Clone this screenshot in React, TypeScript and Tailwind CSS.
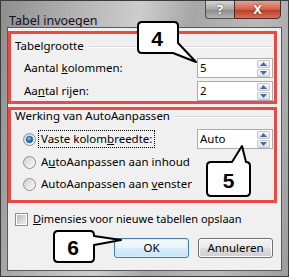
import React from "react";

// ── Small controls ────────────────────────────────────────────────────────────
function Arrow({ up }: { up?: boolean }) {
  return (
    <svg width="7" height="4" viewBox="0 0 7 4">
      <path d={up ? "M0 4 L3.5 0 L7 4 Z" : "M0 0 L3.5 4 L7 0 Z"} fill="#4569ad" />
    </svg>
  );
}

function SpinBtn({ up }: { up?: boolean }) {
  return (
    <div className="flex h-[8px] w-[13px] items-center justify-center rounded-[1px] border border-[#c4c7cc] bg-[linear-gradient(#f7f7f7,#e2e3e6)]">
      <Arrow up={up} />
    </div>
  );
}

function SpinBox({ value }: { value: string }) {
  return (
    <div className="flex h-[20px] w-[76px] items-center border border-[#abadb3] bg-white pl-[2px] pr-[2px]">
      <span className="flex-1 text-[11.5px] leading-none text-black">{value}</span>
      <div className="flex flex-col gap-px">
        <SpinBtn up />
        <SpinBtn />
      </div>
    </div>
  );
}

function Radio({ checked }: { checked?: boolean }) {
  return (
    <svg width="13" height="13" viewBox="0 0 13 13" className="shrink-0">
      <defs>
        <linearGradient id="rg" x1="0" y1="0" x2="1" y2="1">
          <stop offset="0" stopColor="#cfcfcf" />
          <stop offset="1" stopColor="#fdfdfd" />
        </linearGradient>
        <radialGradient id="rb" cx="0.4" cy="0.35" r="0.7">
          <stop offset="0" stopColor="#8fd0ff" />
          <stop offset="0.5" stopColor="#1d7fd0" />
          <stop offset="1" stopColor="#0b4f91" />
        </radialGradient>
      </defs>
      <circle cx="6.5" cy="6.5" r="6" fill="url(#rg)" stroke="#8e8f8f" />
      {checked && <circle cx="6.5" cy="6.5" r="3.3" fill="url(#rb)" stroke="#1c5180" strokeWidth="0.6" />}
    </svg>
  );
}

function Check() {
  return (
    <div className="flex h-[13px] w-[13px] shrink-0 items-center justify-center border border-[#8e8f8f] bg-white">
      <div className="h-[9px] w-[9px] bg-[linear-gradient(135deg,#b9b9b9,#f0f0f0)]" />
    </div>
  );
}

function Btn({ label, def }: { label: string; def?: boolean }) {
  return (
    <div
      className={
        def
          ? "flex h-[20px] w-[75px] items-center justify-center rounded-[3px] border border-[#3c7fb1] bg-[linear-gradient(#f6fbfe_0%,#e8f4fc_50%,#d8ecf9_51%,#c8e5f8_100%)] shadow-[inset_0_0_0_1px_#d2f0fd] text-[11.5px] text-black"
          : "flex h-[20px] w-[75px] items-center justify-center rounded-[3px] border border-[#707070] bg-[linear-gradient(#f2f2f2_0%,#ebebeb_50%,#dddddd_51%,#cfcfcf_100%)] shadow-[inset_0_0_0_1px_#fcfcfc] text-[11.5px] text-black"
      }
    >
      {label}
    </div>
  );
}

function GroupLabel({ text }: { text: string }) {
  return (
    <div className="flex h-[12px] items-center pl-[4px] pr-[2px] leading-[12px]">
      <span className="text-[11.5px] text-black">{text}</span>
      <div className="ml-[4px] h-px flex-1 bg-[#d5dfe5] shadow-[0_1px_0_#ffffff]" />
    </div>
  );
}

// ── Main ──────────────────────────────────────────────────────────────────────
export default function App() {
  return (
    <div className="relative flex h-[277px] w-[289px] flex-col overflow-hidden border border-[#3b3b3b] bg-[linear-gradient(100deg,#8e8e8e_0%,#b2b2b2_22%,#cdcdcd_42%,#a6a6a6_58%,#bababa_78%,#9d9d9d_100%)] font-['Noto_Sans',sans-serif]">
      {/* Title bar */}
      <div className="h-[26px] shrink-0 pl-[8px] pt-[6px]">
        <span className="text-[12.5px] leading-[16px] text-[#111122]">Tabel invoegen</span>
      </div>

      {/* Caption buttons */}
      <div className="absolute right-[7px] top-[-1px] flex h-[19px]">
        <div className="flex w-[29px] items-center justify-center rounded-bl-[4px] border border-r-0 border-[#4f4f4f] bg-[linear-gradient(#d6d6d6,#a4a4a4_50%,#8c8c8c_51%,#b4b4b4)] text-[13px] font-bold leading-none text-white [text-shadow:0_0_2px_#333]">
          ?
        </div>
        <div className="flex w-[47px] items-center justify-center rounded-br-[4px] border border-[#4f2a24] bg-[linear-gradient(#e8a090,#d0604c_50%,#b83a24_51%,#d9705a)] text-[13px] font-bold leading-none text-white [text-shadow:0_0_2px_#5a1a10]">
          X
        </div>
      </div>

      {/* Client area */}
      <div className="mx-[6px] flex h-[244px] flex-col border border-[#5a5a5a] bg-[#f0f0f0]">
        {/* Tabelgrootte */}
        <div className="mt-[3px] w-[269px] border-[3px] border-[#e84b44] pt-[6px]">
          <GroupLabel text="Tabelgrootte" />
          <div className="mt-[6px] flex h-[20px] items-center justify-between pl-[13px] pr-[1px]">
            <span className="text-[11.5px] text-black">
              Aantal <span className="underline">k</span>olommen:
            </span>
            <SpinBox value="5" />
          </div>
          <div className="mt-[3px] flex h-[20px] items-center justify-between pl-[13px] pr-[1px]">
            <span className="text-[11.5px] text-black">
              Aa<span className="underline">n</span>tal rijen:
            </span>
            <SpinBox value="2" />
          </div>
        </div>

        {/* Werking van AutoAanpassen */}
        <div className="mt-[3px] w-[269px] border-[3px] border-[#e84b44] pb-[6px]">
          <GroupLabel text="Werking van AutoAanpassen" />
          <div className="mt-[7px] flex h-[20px] items-center justify-between pl-[12px] pr-[1px]">
            <div className="flex items-center gap-[2px]">
              <Radio checked />
              <span className="border border-dotted border-black px-[2px] py-[1px] text-[11.5px] leading-[14px] text-black">
                Vaste kolom<span className="underline">b</span>reedte:
              </span>
            </div>
            <SpinBox value="Auto" />
          </div>
          <div className="mt-[3px] flex h-[20px] items-center gap-[5px] pl-[12px]">
            <Radio />
            <span className="text-[11.5px] text-black">
              A<span className="underline">u</span>toAanpassen aan inhoud
            </span>
          </div>
          <div className="mt-[2px] flex h-[20px] items-center gap-[5px] pl-[12px]">
            <Radio />
            <span className="text-[11.5px] text-black">
              AutoAanpassen aan <span className="underline">v</span>enster
            </span>
          </div>
        </div>

        {/* Checkbox */}
        <div className="mt-[8px] flex h-[16px] items-center gap-[5px] pl-[7px]">
          <Check />
          <span className="text-[11px] text-black">
            <span className="underline">D</span>imensies voor nieuwe tabellen opslaan
          </span>
        </div>

        {/* Buttons */}
        <div className="mt-[11px] flex justify-end gap-[9px] pr-[8px]">
          <Btn label="OK" def />
          <Btn label="Annuleren" />
        </div>
      </div>

      {/* Callouts */}
      <svg className="pointer-events-none absolute left-[-1px] top-[-1px]" width="289" height="277" viewBox="0 0 289 277">
        <g fill="#ffffff" stroke="#000000" strokeWidth="2" strokeLinejoin="round">
          <path d="M142,22 H174 Q178,22 178,26 V43 L196,62 L173,53 H142 Q138,53 138,49 V26 Q138,22 142,22 Z" />
          <path d="M211,162 H232 L242,146 L246,162 Q250,162 250,166 V192 Q250,196 246,196 H211 Q207,196 207,192 V166 Q207,162 211,162 Z" />
          <path d="M58,231 H90 Q94,231 94,235 V236 L121,240 L94,245 V258 Q94,262 90,262 H58 Q54,262 54,258 V235 Q54,231 58,231 Z" />
        </g>
      </svg>
      <span className="absolute left-[136px] top-[20px] flex h-[34px] w-[40px] items-center justify-center font-['Liberation_Sans',sans-serif] text-[21px] font-bold leading-none text-black">
        4
      </span>
      <span className="absolute left-[206px] top-[161px] flex h-[36px] w-[43px] items-center justify-center font-['Liberation_Sans',sans-serif] text-[21px] font-bold leading-none text-black">
        5
      </span>
      <span className="absolute left-[52px] top-[230px] flex h-[33px] w-[40px] items-center justify-center font-['Liberation_Sans',sans-serif] text-[21px] font-bold leading-none text-black">
        6
      </span>
    </div>
  );
}
